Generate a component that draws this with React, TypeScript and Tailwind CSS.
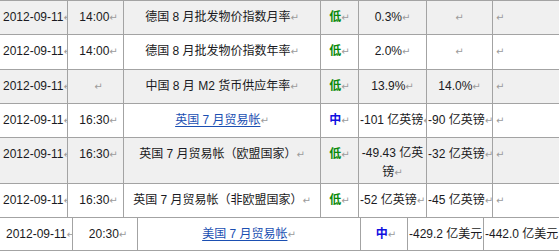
const font = '[font-family:"Liberation_Sans","Noto_Sans_CJK_SC",sans-serif]';

function P() {
  return <span className="text-[#9b9b9b] text-[10px] [font-family:'DejaVu_Sans',sans-serif]">↵</span>;
}

const rowsTop: { bg: string; h: string; cells: React.ReactNode[] }[] = [
  {
    bg: 'bg-[#f0f0f0]',
    h: 'h-[34px]',
    cells: ['2012-09-11', <>14:00<P /></>, <>德国 8 月批发物价指数月率<P /></>, 'low', <>0.3%<P /></>, <P />, <P />],
  },
  {
    bg: 'bg-white',
    h: 'h-[35px]',
    cells: ['2012-09-11', <>14:00<P /></>, <>德国 8 月批发物价指数年率<P /></>, 'low', <>2.0%<P /></>, <P />, <P />],
  },
  {
    bg: 'bg-[#f0f0f0]',
    h: 'h-[34px]',
    cells: ['2012-09-11', <P />, <>中国 8 月 M2 货币供应年率<P /></>, 'low', <>13.9%<P /></>, <>14.0%<P /></>, <P />],
  },
  {
    bg: 'bg-white',
    h: 'h-[34px]',
    cells: [
      '2012-09-11',
      <>16:30<P /></>,
      <><a className="text-[#1b4fb2] underline underline-offset-2">英国 7 月贸易帐</a><P /></>,
      'mid',
      <>-101 亿英镑<P /></>,
      <>-90 亿英镑<P /></>,
      <P />,
    ],
  },
  {
    bg: 'bg-[#f0f0f0]',
    h: 'h-[46px]',
    cells: ['2012-09-11', <>16:30<P /></>, <>英国 7 月贸易帐（欧盟国家）<P /></>, 'low', 'wrap', <>-32 亿英镑<P /></>, <P />],
  },
  {
    bg: 'bg-white',
    h: 'h-[34px]',
    cells: ['2012-09-11', <>16:30<P /></>, <>英国 7 月贸易帐（非欧盟国家）<P /></>, 'low', <>-52 亿英镑<P /></>, <>-45 亿英镑<P /></>, <P />],
  },
];

const topWidths = ['w-[68px]', 'w-[56px]', 'w-[197px]', 'w-[38px]', 'w-[68px]', 'w-[66px]', 'w-[110px]'];

function Level({ kind }: { kind: string }) {
  if (kind === 'low') return <><span className="font-bold text-[#0a8a0a]">低</span><P /></>;
  return <><span className="font-bold text-[#1010e0]">中</span><P /></>;
}

function render(c: React.ReactNode) {
  if (c === 'low' || c === 'mid') return <Level kind={c as string} />;
  return c;
}

export default function App() {
  return (
    <div className={`w-[559px] h-[251px] overflow-hidden bg-white text-[12px] leading-5 text-[#1a1a22] ${font}`}>
      <div className="w-[620px] border-t border-[#a3a3a3]">
        {rowsTop.map((r, i) => (
          <div key={i} className={`flex ${r.h} ${r.bg} border-b border-[#a3a3a3]`}>
            {r.cells.map((c, j) => {
              const isDate = j === 0;
              const isLast = j === 6;
              const isTime = j === 1;
              const wrap = c === 'wrap';
              return (
                <div
                  key={j}
                  className={`${topWidths[j]} shrink-0 overflow-hidden pt-[6px] border-r border-[#a3a3a3] ${
                    isDate || isLast ? 'text-left pl-[3px]' : isTime ? 'text-center pl-[6px]' : 'text-center px-[1px]'
                  } ${wrap ? 'whitespace-normal leading-[19px]' : 'whitespace-nowrap'}`}
                >
                  {isDate ? <>{c}<P /></> : wrap ? <>-49.43 亿英镑<P /></> : render(c)}
                </div>
              );
            })}
          </div>
        ))}
        <div className="flex h-[33px] bg-white border-b border-[#a3a3a3]">
          <div className="w-[73px] shrink-0 overflow-hidden whitespace-nowrap pt-[6px] pl-[6px] border-r border-[#a3a3a3]">
            2012-09-11<P />
          </div>
          <div className="w-[65px] shrink-0 overflow-hidden whitespace-nowrap pt-[6px] text-center pl-[6px] border-r border-[#a3a3a3]">
            20:30<P />
          </div>
          <div className="w-[223px] shrink-0 overflow-hidden whitespace-nowrap pt-[6px] text-center border-r border-[#a3a3a3]">
            <a className="text-[#1b4fb2] underline underline-offset-2">美国 7 月贸易帐</a>
            <P />
          </div>
          <div className="w-[47px] shrink-0 overflow-hidden whitespace-nowrap pt-[6px] text-center pl-[4px] border-r border-[#a3a3a3]">
            <Level kind="mid" />
          </div>
          <div className="w-[76px] shrink-0 overflow-hidden whitespace-nowrap pt-[6px] text-center px-[1px] border-r border-[#a3a3a3]">
            -429.2 亿美元<P />
          </div>
          <div className="w-[120px] shrink-0 overflow-hidden whitespace-nowrap pt-[6px] text-left pl-[1px]">
            -442.0 亿美元<P />
          </div>
        </div>
      </div>
    </div>
  );
}
